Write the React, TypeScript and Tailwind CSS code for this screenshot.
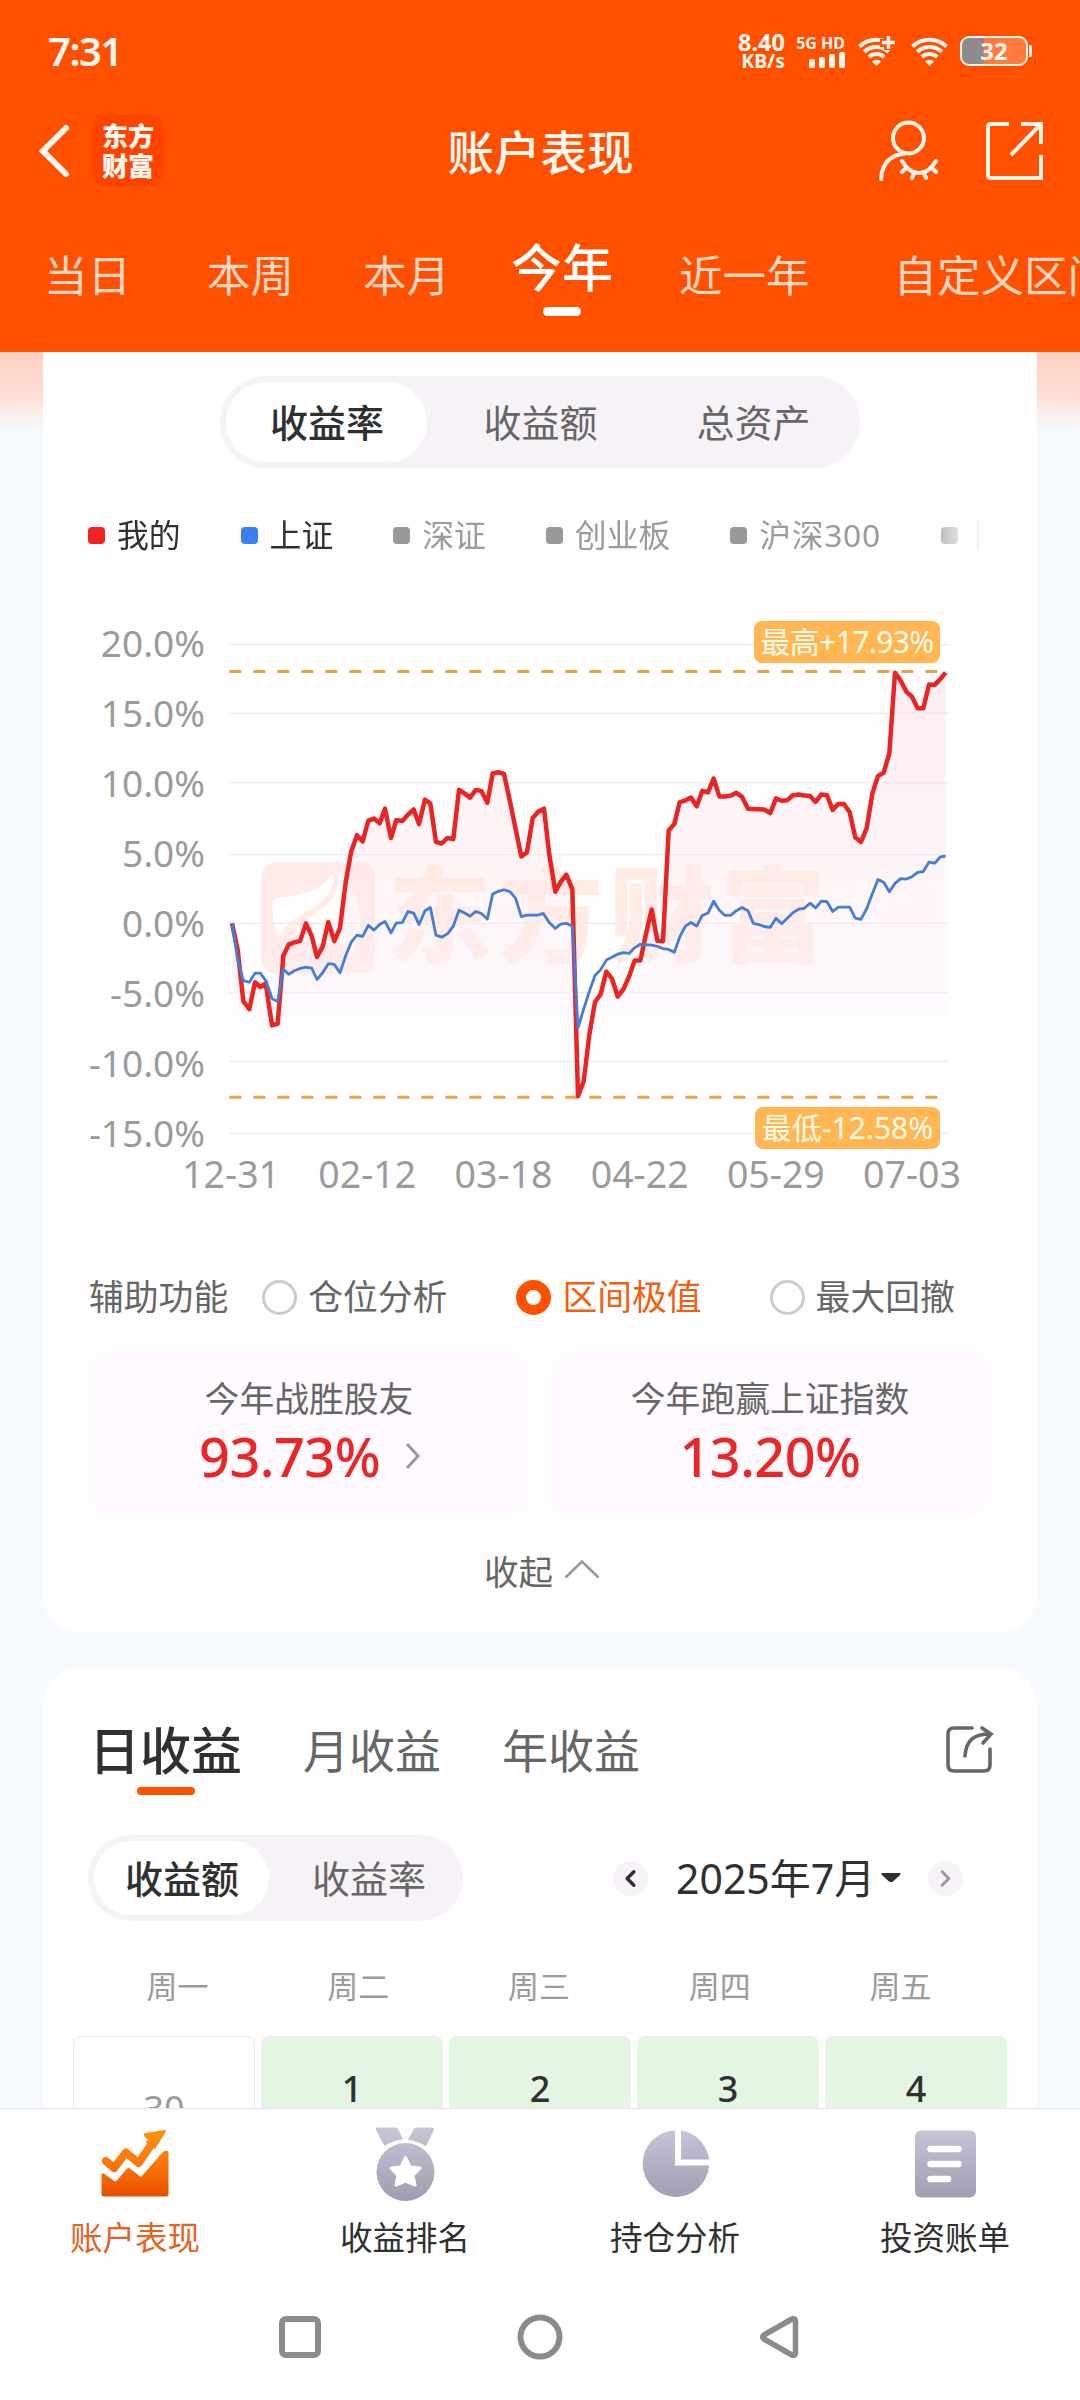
import { ChevronLeft, ChevronRight } from 'lucide-react';
import clsx from 'clsx';

const periods = [
  { label: '当日', gap: 'ml-[44px]' },
  { label: '本周', gap: 'ml-[76px]' },
  { label: '本月', gap: 'ml-[69px]' },
  { label: '今年', gap: 'ml-[61px]', active: true },
  { label: '近一年', gap: 'ml-[66px]' },
  { label: '自定义区间', gap: 'ml-[84px]' },
];

const legend = [
  { label: '我的', dot: 'bg-[#f52222]', text: 'text-[#303030]' },
  { label: '上证', dot: 'bg-[#3b80f0]', text: 'text-[#303030]' },
  { label: '深证', dot: 'bg-[#9b989b]', text: 'text-[#9b9b9b]' },
  { label: '创业板', dot: 'bg-[#9b989b]', text: 'text-[#9b9b9b]' },
  { label: '沪深300', dot: 'bg-[#9b989b]', text: 'text-[#9b9b9b] tracking-[0.7px]' },
  { label: '中证500', dot: 'bg-[#9b989b]', text: 'text-[#9b9b9b]' },
];

const yLabels = ['20.0%', '15.0%', '10.0%', '5.0%', '0.0%', '-5.0%', '-10.0%', '-15.0%'];
const xLabels = ['12-31', '02-12', '03-18', '04-22', '05-29', '07-03'];
const gridLines = [138, 312, 487, 669, 843, 1018, 1192, 1374];

// Chart series, in viewBox units of the plot
const mine =
  '516,843 533,910 550,1040 568,1060 585,992 601,1004 617,995 636,1101 653,1097 670,925 686,897 703,891 720,888 738,843 755,875 771,928 788,902 805,840 823,888 840,855 857,740 874,660 891,620 908,636 925,583 942,578 959,590 975,553 993,627 1009,582 1027,584 1044,568 1061,555 1077,592 1095,530 1111,540 1128,637 1145,641 1163,627 1180,630 1197,505 1214,515 1230,525 1247,506 1264,508 1282,538 1298,464 1315,461 1332,465 1350,535 1367,605 1384,674 1401,663 1418,577 1435,560 1452,553 1468,670 1486,763 1502,738 1519,720 1537,757 1554,1280 1571,1243 1588,1125 1605,1042 1622,1022 1639,965 1656,983 1673,1028 1690,1010 1707,978 1724,937 1741,937 1758,870 1775,808 1792,887 1809,888 1826,608 1843,592 1859,537 1876,532 1893,525 1910,547 1927,508 1944,512 1961,477 1978,522 1995,522 2012,520 2029,513 2046,523 2064,553 2112,555 2131,564 2148,527 2165,533 2181,532 2199,519 2216,517 2233,520 2250,521 2267,536 2284,517 2301,519 2318,556 2335,541 2352,541 2369,562 2386,626 2403,637 2420,602 2437,515 2454,470 2471,462 2488,413 2505,209 2522,229 2539,257 2556,270 2573,299 2590,299 2607,239 2624,240 2641,225 2657,209';
const index =
  '516,843 533,935 550,988 568,992 585,969 601,969 619,990 636,1033 653,1041 670,959 686,972 703,963 720,957 738,954 755,956 771,985 788,968 805,945 823,947 840,968 857,925 874,890 891,873 908,876 925,848 942,860 959,846 975,838 993,867 1009,842 1027,841 1044,813 1061,817 1077,846 1095,811 1111,803 1128,873 1145,878 1163,869 1180,850 1197,810 1214,817 1230,825 1247,813 1264,818 1282,832 1298,769 1315,762 1332,758 1350,763 1367,780 1384,826 1401,822 1435,822 1450,818 1467,840 1486,856 1502,845 1519,843 1537,850 1554,1107 1571,1060 1588,1015 1605,975 1622,960 1639,936 1656,929 1673,921 1690,917 1707,919 1724,905 1741,896 1775,898 1792,901 1809,907 1826,909 1843,916 1859,878 1876,850 1893,841 1910,850 1927,823 1944,817 1961,787 1978,810 1995,823 2012,823 2029,811 2046,803 2064,811 2080,843 2097,846 2112,851 2131,853 2148,830 2165,844 2181,831 2199,816 2216,807 2233,805 2250,792 2267,804 2284,787 2301,788 2318,813 2335,802 2369,802 2386,830 2403,833 2420,806 2437,768 2454,732 2471,739 2488,763 2505,742 2522,730 2539,731 2556,725 2573,714 2590,712 2607,688 2624,691 2641,675 2657,673';

const helpers = [
  { label: '仓位分析', gap: 'ml-[34px]' },
  { label: '区间极值', gap: 'ml-[69px]', active: true },
  { label: '最大回撤', gap: 'ml-[68px]' },
];

const weekdays = ['周一', '周二', '周三', '周四', '周五'];
const days = ['30', '1', '2', '3', '4'];

function Wifi({ plus = false }: { plus?: boolean }) {
  return (
    <svg width="38" height="30" viewBox="0 0 38 30" fill="none" stroke="#fff4ec" strokeWidth="4">
      <path d="M1.5 10.5A25 25 0 0 1 35.5 10.5" />
      <path d="M6.2 15.8A18 18 0 0 1 30.8 15.8" />
      <path d="M10.8 21A11.5 11.5 0 0 1 26.2 21" />
      <path d="M14 25.5Q18.5 22 23 25.5L18.5 30Z" fill="#fff4ec" stroke="none" />
      {plus && (
        <>
          <path d="M22 7H38M30 0V14" stroke="#ff5000" strokeWidth="8" />
          <path d="M24 6.5H37M30.5 0V13" strokeWidth="3.4" />
        </>
      )}
    </svg>
  );
}

function StatusBar() {
  return (
    <div className="flex h-[102px] items-center pl-[48px] pr-[48px] text-[#fff8f2]">
      <span className="text-[40px] font-semibold leading-none tracking-[-1.5px]">7:31</span>
      <div className="ml-auto flex items-center">
        <div className="flex flex-col items-end font-bold">
          <span className="text-[23.500px] leading-[20px]">8.40</span>
          <span className="text-[19.500px] leading-[18px]">KB/s</span>
        </div>
        <div className="ml-[12px] flex w-[48px] flex-col items-end">
          <span className="whitespace-nowrap text-[16px] font-bold leading-[17px]">5G HD</span>
          <div className="flex items-end gap-[4px]">
            <span className="h-[9px] w-[6px] rounded-[2px] bg-[#fff4ec]" />
            <span className="h-[11px] w-[6px] rounded-[2px] bg-[#fff4ec]" />
            <span className="h-[14px] w-[6px] rounded-[2px] bg-[#fff4ec]" />
            <span className="h-[16px] w-[6px] rounded-[2px] bg-[#fff4ec]" />
          </div>
        </div>
        <div className="ml-[13px]">
          <Wifi plus />
        </div>
        <div className="ml-[15px]">
          <Wifi />
        </div>
        <div className="ml-[11px] flex h-[30px] w-[68px] items-center justify-center rounded-[9px] border-2 border-[#fff4ec] bg-[linear-gradient(90deg,#8d8b90_34%,#ff7a3c_34%)]">
          <span className="text-[24px] font-bold leading-none">32</span>
        </div>
        <span className="ml-[1px] h-[12px] w-[3px] rounded-r-[2px] bg-[#fff4ec]" />
      </div>
    </div>
  );
}

function Header() {
  return (
    <header className="h-[352px] shrink-0 bg-[#ff5000]">
      <StatusBar />
      <div className="flex h-[98px] items-center pl-[38px] pr-[37px]">
        <div className="flex flex-1 items-center">
          <svg width="32" height="56" viewBox="0 0 32 56" fill="none" stroke="#fff8f2" strokeWidth="6" strokeLinecap="round">
            <path d="M28 5L5 28L28 51" />
          </svg>
          <div className="ml-[22px] flex h-[72px] w-[72px] flex-col items-center justify-center rounded-[14px] bg-[#ff4400] text-[26px] font-black leading-[30px] text-[#fff8f2]">
            <span>东方</span>
            <span>财富</span>
          </div>
        </div>
        <h1 className="pt-[2px] text-[46.500px] font-medium leading-none text-[#fff8f2]">账户表现</h1>
        <div className="flex flex-1 items-center justify-end gap-[47px]">
          <svg width="62" height="62" viewBox="0 0 62 62" fill="none" stroke="#fff4ec" strokeWidth="4" strokeLinecap="round">
            <circle cx="32.500" cy="18" r="15.500" />
            <path d="M29 33.500C14 35 6 44 5 59" />
            <path d="M26 41C35 57 51 57 60 41" />
            <path d="M30 48L26 52M38 53L36 58M48 53L50 58M56 48L60 52" />
          </svg>
          <svg width="58" height="60" viewBox="0 0 58 60" fill="none" stroke="#fff4ec" strokeWidth="4">
            <path d="M24 3H6Q3 3 3 6V54Q3 57 6 57H56V34" />
            <path d="M36 3H56V23M55 4L26 34" />
          </svg>
        </div>
      </div>
      <nav className="flex h-[152px] overflow-hidden whitespace-nowrap">
        {periods.map((p) =>
          p.active ? (
            <div key={p.label} className={clsx('flex shrink-0 flex-col items-center pt-[42px]', p.gap)}>
              <span className="text-[51px] font-medium leading-none text-white">{p.label}</span>
              <span className="mt-[14px] h-[9px] w-[38px] rounded-full bg-white" />
            </div>
          ) : (
            <span key={p.label} className={clsx('shrink-0 text-[43.500px] leading-[151px] text-[#ffd6c2]', p.gap)}>
              {p.label}
            </span>
          ),
        )}
      </nav>
    </header>
  );
}

// Brand mark that sits faintly behind the plot
function Watermark() {
  return (
    <div className="absolute left-[218px] top-[271px] flex items-center">
      <svg width="114" height="112" viewBox="603 685 343 336">
        <rect x="603" y="685" width="343" height="336" rx="45" fill="#ffece9" />
        <path d="M637 812Q638 794 656 791C730 785 790 772 818 717C832 780 770 816 735 836C700 860 670 875 660 905C645 881 637 851 637 812Z" fill="#fff" />
        <path d="M832 712C905 762 925 892 870 975C862 934 835 910 800 928C740 946 710 916 710 880C740 845 850 821 832 712Z" fill="#fff" opacity=".85" />
      </svg>
      <span className="mb-[8px] ml-[12px] whitespace-nowrap text-[105px] font-black leading-none tracking-[6px] text-[#ffede5]">东方财富</span>
    </div>
  );
}

function Chart() {
  return (
    <div className="mt-[35px]">
      <div className="relative flex h-[570px] text-[37px] text-[#9b9b9b]">
        <Watermark />
        <div className="flex w-[162px] flex-col pt-[18px] text-right">
          {yLabels.map((y) => (
            <span key={y} className="h-[70px] leading-[70px]">
              {y}
            </span>
          ))}
        </div>
        <svg
          className="relative ml-[24px] shrink-0 overflow-visible"
          width="720"
          height="570"
          viewBox="507 0 2160 1441.500"
          preserveAspectRatio="none"
          fill="none"
        >
          <defs>
            <linearGradient id="area" gradientUnits="userSpaceOnUse" x1="0" y1="209" x2="0" y2="1080">
              <stop offset="0" stopColor="#fbd5e2" stopOpacity=".42" />
              <stop offset=".6" stopColor="#fde3e6" stopOpacity=".33" />
              <stop offset="1" stopColor="#fbf3ff" stopOpacity=".45" />
            </linearGradient>
            <clipPath id="plot">
              <rect x="507" y="150" width="2160" height="930" />
            </clipPath>
          </defs>
          {gridLines.map((y) => (
            <path key={y} d={`M507 ${y}H2667`} stroke="#efeaf0" strokeWidth="1.200" vectorEffect="non-scaling-stroke" />
          ))}
          <polygon points={`516,1080 ${mine} 2657,1080`} fill="url(#area)" clipPath="url(#plot)" />
          <path
            d="M508 206H2635M508 1283H2635"
            stroke="#e6a740"
            strokeWidth="3"
            strokeDasharray="12 12"
            vectorEffect="non-scaling-stroke"
          />
          <polyline points={mine} stroke="#e92524" strokeWidth="4.500" strokeLinejoin="round" vectorEffect="non-scaling-stroke" />
          <polyline points={index} stroke="#447dd8" strokeWidth="2.800" strokeLinejoin="round" vectorEffect="non-scaling-stroke" />
        </svg>
        <span className="absolute left-[711px] top-[31px] flex h-[42px] w-[186px] items-center justify-center whitespace-nowrap rounded-[8px] bg-[#ffb653] text-[30px] leading-none tracking-[-0.6px] text-[#fffbea]">
          最高+17.93%
        </span>
        <span className="absolute left-[712px] top-[517px] flex h-[42px] w-[185px] items-center justify-center whitespace-nowrap rounded-[8px] bg-[#ffb653] text-[30px] leading-none text-[#fffbea]">
          最低-12.58%
        </span>
      </div>
      <div className="ml-[120px] mt-[2px] flex h-[24px] items-center text-[37.500px] leading-none text-[#9b9b9b]">
        {xLabels.map((x) => (
          <span key={x} className="w-[136.200px] text-center">
            {x}
          </span>
        ))}
      </div>
    </div>
  );
}

function PerformanceCard() {
  return (
    <section className="h-[1280px] w-[994px] shrink-0 rounded-b-[36px] bg-[#fefefe] pt-[24px]">
      <div className="ml-[177px] flex h-[92px] w-[640px] items-center rounded-full bg-[#f6f2f7] pl-[6px] text-[38px] leading-none text-[#666]">
        <span className="flex h-[80px] w-[201px] items-center justify-center rounded-full bg-white pl-[1px] font-medium text-[#303030]">收益率</span>
        <span className="w-[227px] text-center">收益额</span>
        <span className="w-[199px] text-center">总资产</span>
      </div>

      <div className="mt-[47px] flex items-center pl-[45px]">
        <div className="flex h-10 w-[889px] items-center overflow-hidden whitespace-nowrap text-[31.800px] leading-[40px] [mask-image:linear-gradient(90deg,#000_94%,transparent_99.500%)]">
          {legend.map((item) => (
            <div key={item.label} className="mr-[60px] flex shrink-0 items-center">
              <span className={clsx('h-[17px] w-[17px] rounded-[4px]', item.dot)} />
              <span className={clsx('ml-[12px]', item.text)}>{item.label}</span>
            </div>
          ))}
        </div>
        <span className="h-[29px] w-[2px] bg-[#f0f0f0]" />
      </div>

      <Chart />

      <div className="mt-[91px] flex h-10 items-center pl-[46px] text-[34.800px] leading-none text-[#666]">
        <span>辅助功能</span>
        {helpers.map((h) => (
          <div key={h.label} className={clsx('flex items-center', h.gap)}>
            <span className={clsx('h-[35px] w-[35px] rounded-full', h.active ? 'border-[10px] border-[#ff5000]' : 'border-[3px] border-[#ccc]')} />
            <span className={clsx('ml-[11px]', h.active && 'text-[#f0600f]')}>{h.label}</span>
          </div>
        ))}
      </div>

      <div className="mt-[33px] flex h-[167px] gap-[20px] px-[45px] text-center">
        <div className="w-[442px] rounded-[22px] bg-[#fefaff] pt-[32px]">
          <p className="text-[34.800px] leading-none text-[#666]">今年战胜股友</p>
          <div className="ml-[111px] mt-[12px] flex items-center">
            <span className="text-[54px] font-medium leading-none tracking-[-0.5px] text-[#ea2626]">93.73%</span>
            <svg className="ml-[24px]" width="17" height="28" viewBox="0 0 17 28" fill="none" stroke="#999" strokeWidth="3">
              <path d="M3 2L14 14L3 26" />
            </svg>
          </div>
        </div>
        <div className="w-[440px] rounded-[22px] bg-[#fefaff] pt-[32px]">
          <p className="text-[34.800px] leading-none text-[#666]">今年跑赢上证指数</p>
          <p className="mt-[12px] text-[54px] font-medium leading-none tracking-[-0.5px] text-[#ea2626]">13.20%</p>
        </div>
      </div>

      <div className="mt-[35px] flex h-10 items-center pl-[441px] text-[34.500px] leading-none text-[#666]">
        <span>收起</span>
        <svg className="mb-[7px] ml-[11px]" width="36" height="20" viewBox="0 0 36 20" fill="none" stroke="#999" strokeWidth="2.600">
          <path d="M1.500 18.500L18 2.500L34.500 18.500" />
        </svg>
      </div>
    </section>
  );
}

function CalendarCard() {
  return (
    <section className="mt-[36px] w-[994px] rounded-t-[36px] bg-[#fefefe] pt-[57px]">
      <div className="flex h-[50px] items-center pl-[46px] text-[46px] leading-none text-[#666]">
        <span className="text-[51px] font-medium text-[#303030]">日收益</span>
        <span className="ml-[61px]">月收益</span>
        <span className="ml-[61px]">年收益</span>
        <svg className="ml-auto mr-[43px]" width="48" height="50" viewBox="0 0 48 50" fill="none" stroke="#666" strokeWidth="3.600" strokeLinecap="round">
          <path d="M26 3H8Q2 3 2 9V40Q2 46 8 46H38Q44 46 44 40V24" />
          <path d="M19 31C20 16 27 9 44 9M36 3L45 9L37 18" />
        </svg>
      </div>
      <div className="ml-[94px] mt-[12px] h-[8px] w-[58px] rounded-full bg-[#ff5000]" />

      <div className="mt-[40px] flex h-[86px] items-center pl-[45px] leading-none">
        <div className="flex h-[86px] w-[375px] items-center rounded-full bg-[#f6f2f7] pl-[6px] text-[38px] text-[#666]">
          <span className="flex h-[74px] w-[175px] items-center justify-center rounded-full bg-white pl-[1px] font-medium text-[#303030]">收益额</span>
          <span className="ml-[43px]">收益率</span>
        </div>
        <span className="ml-[150px] flex h-[35px] w-[35px] items-center justify-center rounded-full bg-[#f6f2f7] text-[#303030]">
          <ChevronLeft size={27} strokeWidth={3} />
        </span>
        <span className="ml-[28px] w-[205px] whitespace-nowrap text-[41px] text-[#303030]">2025年7月</span>
        <svg width="20" height="10" viewBox="0 0 20 10" fill="#303030">
          <path d="M1 0H19Q20 1 19 2L12 8.500Q10 10 8 8.500L1 2Q0 1 1 0Z" />
        </svg>
        <span className="ml-[27px] flex h-[35px] w-[35px] items-center justify-center rounded-full bg-[#f6f2f7] text-[#999]">
          <ChevronRight size={27} strokeWidth={2.6} />
        </span>
      </div>

      <div className="mt-[45px] flex h-10 items-center pl-[44px] text-[31px] leading-none text-[#9b9b9b]">
        {weekdays.map((d) => (
          <span key={d} className="w-[180.800px] text-center">
            {d}
          </span>
        ))}
      </div>

      <div className="mt-[30px] flex h-[140px] gap-[6px] pl-[30px] text-center text-[36px]">
        {days.map((d) =>
          d === '30' ? (
            <div key={d} className="w-[182px] rounded-[8px] border border-[#ececec] pt-[54px] leading-none text-[#9b9b9b]">
              {d}
            </div>
          ) : (
            <div key={d} className="w-[182px] rounded-[8px] bg-[#e4f5e4] pt-[35px] font-medium leading-none text-[#303030]">
              {d}
            </div>
          ),
        )}
      </div>
    </section>
  );
}

function TabBar() {
  return (
    <nav className="grid h-[182px] shrink-0 grid-cols-4 border-t border-[#e8e6ea] bg-[#fefefe] text-[32.500px] leading-none text-[#303030]">
      <div className="flex flex-col items-center gap-[18px] pt-[15px]">
        <svg width="70" height="80" viewBox="0 0 70 80">
          <defs>
            <linearGradient id="hot" gradientUnits="userSpaceOnUse" x1="0" y1="6" x2="0" y2="72">
              <stop offset="0" stopColor="#f7950c" />
              <stop offset=".45" stopColor="#fb7a08" />
              <stop offset="1" stopColor="#ea5000" />
            </linearGradient>
            <linearGradient id="muted" gradientUnits="userSpaceOnUse" x1="0" y1="4" x2="0" y2="76">
              <stop offset="0" stopColor="#c8c5d8" />
              <stop offset="1" stopColor="#a09db0" />
            </linearGradient>
          </defs>
          <path d="M6 37L14 44L26 28.500L38.500 39L53 18" fill="none" stroke="url(#hot)" strokeWidth="8" strokeLinejoin="round" strokeLinecap="round" />
          <path d="M44 12Q43 9.500 46 9L64 6Q67 6 65.500 8.500L55 25L45.500 18L48 16Z" fill="url(#hot)" />
          <path d="M1.500 51Q2 48 4.500 50L15 57.500Q16 57.500 17 56.500L27 44.500Q28.500 43.500 30 44.500L41 53L63 28Q68 25 68.500 29V70Q68.500 72.500 66 72.500H4Q1.500 72.500 1.500 70Z" fill="url(#hot)" />
        </svg>
        <span className="text-[#e26322]">账户表现</span>
      </div>
      <div className="flex flex-col items-center gap-[18px] pt-[15px]">
        <svg width="70" height="80" viewBox="0 0 70 80">
          <path d="M8 3.500H26Q27.500 3.500 28 5L33 15.500Q24 16 14.500 22L6 6Q5 3.500 8 3.500ZM62 3.500H46Q44.500 3.500 44 5L38 15.500Q47 17 56 22L64 6Q65 3.500 62 3.500Z" fill="url(#muted)" />
          <circle cx="35.500" cy="48" r="29" fill="url(#muted)" />
          <path d="M35.500 33.500L40 43L50 44L43 51.500L45 61L35.500 57L26 61L28 51.500L21 44L31 43Z" fill="#fff" stroke="#fff" strokeWidth="3" strokeLinejoin="round" />
        </svg>
        <span>收益排名</span>
      </div>
      <div className="flex flex-col items-center gap-[18px] pt-[15px]">
        <svg width="70" height="80" viewBox="0 0 70 80" fill="url(#muted)">
          <path d="M35 6.500A33.200 33.200 0 1 0 69 41.500H35Z" />
          <path d="M41 6.500A33.200 33.200 0 0 1 69 35.500H41Z" />
        </svg>
        <span>持仓分析</span>
      </div>
      <div className="flex flex-col items-center gap-[18px] pt-[15px]">
        <svg width="70" height="80" viewBox="0 0 70 80">
          <rect x="5" y="6.500" width="61" height="67" rx="6" fill="url(#muted)" />
          <path d="M20.500 25H48.500M20.500 40H48.500M20.500 55H38" stroke="#fff" strokeWidth="6.500" strokeLinecap="round" />
        </svg>
        <span>投资账单</span>
      </div>
    </nav>
  );
}

function SystemNav() {
  return (
    <div className="flex h-[110px] shrink-0 items-start justify-center gap-[192px] bg-[#fefefe] pt-[23px]">
      <svg width="48" height="48" viewBox="0 0 48 48" fill="none" stroke="#8c8a8d" strokeWidth="6">
        <rect x="6" y="6" width="36" height="36" rx="4" />
      </svg>
      <svg width="48" height="48" viewBox="0 0 48 48" fill="none" stroke="#8c8a8d" strokeWidth="6">
        <circle cx="24" cy="24" r="19.500" />
      </svg>
      <svg width="48" height="48" viewBox="0 0 48 48" fill="none" stroke="#8c8a8d" strokeWidth="5.500" strokeLinejoin="round">
        <path d="M35 6.500Q39.500 4 39.500 9V39Q39.500 44 35 41.500L8 26Q5 24 8 22Z" />
      </svg>
    </div>
  );
}

export default function App() {
  return (
    <div className="flex h-[2400px] w-[1080px] flex-col overflow-hidden bg-white font-['Noto_Sans','Noto_Sans_CJK_SC',sans-serif]">
      <Header />
      <main className="flex min-h-0 flex-1 flex-col items-center overflow-hidden bg-[#f6faff] bg-[linear-gradient(180deg,#ffcdbe_0px,#fde3dc_50px,#f6faff_78px)]">
        <PerformanceCard />
        <CalendarCard />
      </main>
      <TabBar />
      <SystemNav />
    </div>
  );
}
